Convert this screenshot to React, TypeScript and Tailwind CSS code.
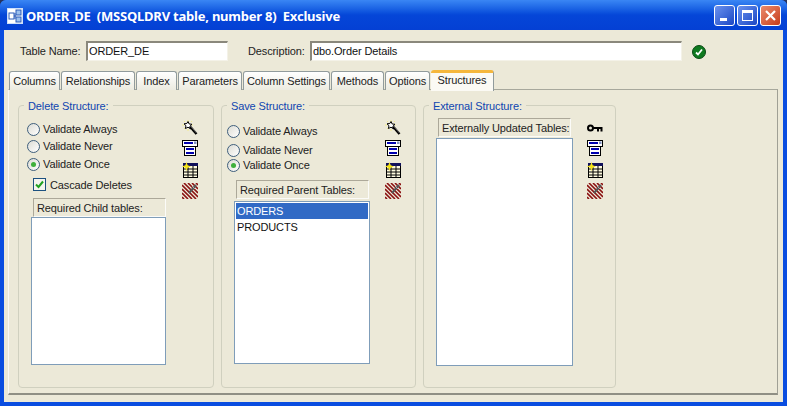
import * as React from "react";

const font = "font-['Liberation_Sans',Arial,sans-serif] tracking-[-0.12px]";

function WandIcon() {
  return (
    <svg width="16" height="16" viewBox="0 0 16 16" className="block">
      <path d="M6 0v2M6 9v2M0 5h2M10 5h1M2 1l1 1M2 9l1-1M10 1L9 2" stroke="#f4ec8c" strokeWidth="1" fill="none" />
      <path d="M6 1.500l1.200 2.500 2.800.3-2 1.900.6 2.800L6 7.200 3.400 8.500 4 5.700 2 3.800l2.800-.3z" fill="#fff" stroke="#000" strokeWidth="1" />
      <path d="M8 6.500l6.500 7.500" stroke="#000" strokeWidth="2.400" />
      <path d="M8.500 6l6 7" stroke="#8a8a8a" strokeWidth="0.7" />
    </svg>
  );
}

function FormIcon() {
  return (
    <svg width="16" height="16" viewBox="0 0 16 16" className="block">
      <rect x="0.500" y="0.500" width="15" height="6" fill="#fff" stroke="#000" />
      <rect x="2" y="2" width="9" height="2" fill="#0000b0" />
      <rect x="12" y="1.500" width="2.500" height="2.500" fill="#7f8fc0" />
      <rect x="2.500" y="6.500" width="11" height="9" fill="#fff" stroke="#000" />
      <rect x="4" y="8" width="8" height="2" fill="#0000b0" />
      <rect x="4" y="12" width="8" height="2" fill="#0000b0" />
    </svg>
  );
}

function GridIcon() {
  return (
    <svg width="16" height="16" viewBox="0 0 16 16" className="block">
      <rect x="1.500" y="1.500" width="14" height="14" fill="#fffbe0" stroke="#000" />
      <rect x="1" y="1" width="15" height="3" fill="#10105a" />
      <path d="M2 7h13M2 10h13M2 13h13M6 4v11M11 4v11" stroke="#000" strokeWidth="1" />
      <path d="M4.500 0l1.200 3.300L9 4.500 5.700 5.700 4.500 9 3.300 5.700 0 4.500l3.300-1.200z" fill="#f4e418" />
    </svg>
  );
}

function HatchIcon() {
  return (
    <svg width="16" height="16" viewBox="0 0 16 16" className="block">
      <path d="M0 2l14 14M0 6l10 10M0 10l6 6M0 14l2 2M2 0l14 14M6 0l10 10M10 0l6 6M14 0l2 2" stroke="#8a1010" strokeWidth="1.600" fill="none" />
      <path d="M7 10l7-8" stroke="#555" strokeWidth="2" />
      <path d="M10 3l3 3" stroke="#aaa" strokeWidth="1" />
    </svg>
  );
}

function KeyIcon() {
  return (
    <svg width="16" height="9" viewBox="0 0 16 9" className="block">
      <circle cx="3.500" cy="4" r="2.500" fill="none" stroke="#000" strokeWidth="2" />
      <path d="M6 3h9.500v2H6zM10 5h2v2.500h-2zM13.500 5h2v2.500h-2z" fill="#000" />
    </svg>
  );
}

function Radio({ label, checked, className }: { label: string; checked?: boolean; className: string }) {
  return (
    <div className={`flex items-center h-[14px] ${className}`}>
      <span className="w-[13px] h-[13px] rounded-full border border-[#3f5f7c] bg-gradient-to-br from-[#dcdcd4] to-white flex items-center justify-center shrink-0">
        {checked && <span className="w-[5px] h-[5px] rounded-full bg-[#3fb03c]" />}
      </span>
      <span className="ml-[3px] text-[11px] leading-none text-[#222]">{label}</span>
    </div>
  );
}

function Icons({ first }: { first?: React.ReactNode }) {
  return (
    <div className="flex flex-col items-center w-[16px] mt-[14px]">
      <div className="h-[16px] flex items-center">{first ?? <WandIcon />}</div>
      <div className="mt-[4px]"><FormIcon /></div>
      <div className="mt-[6px]"><GridIcon /></div>
      <div className="mt-[5px]"><HatchIcon /></div>
    </div>
  );
}

function Group({ title, className, children }: { title: string; className: string; children: React.ReactNode }) {
  return (
    <div className={`relative h-[283px] border border-[#d0d0bf] rounded-[4px] ${className}`}>
      <span className="absolute left-[5px] -top-[7px] bg-[#ece9d8] px-[4px] text-[11px] leading-[14px] text-[#0f46b0]">
        {title}
      </span>
      {children}
    </div>
  );
}

function ListHeader({ label, className }: { label: string; className: string }) {
  return (
    <div className={`h-[19px] flex items-center whitespace-nowrap border-t border-l border-[#aca899] border-r border-r-[#fbfbf8] border-b border-b-[#fbfbf8] pl-[3px] pt-px text-[11px] leading-none text-[#222] ${className}`}>
      {label}
    </div>
  );
}

const tabs = [
  { label: "Columns", w: "w-[51px]" },
  { label: "Relationships", w: "w-[74px]" },
  { label: "Index", w: "w-[41px]" },
  { label: "Parameters", w: "w-[64px]" },
  { label: "Column Settings", w: "w-[87px]" },
  { label: "Methods", w: "w-[53px]" },
  { label: "Options", w: "w-[45px]" },
];

export default function App() {
  return (
    <div className="w-[787px] h-[406px] bg-[#26345e]">
      <div className={`w-full h-full overflow-hidden flex flex-col bg-[#0a4de0] rounded-t-[6px] ${font}`}>
        {/* title bar */}
        <div className="h-[30px] shrink-0 flex items-center pl-[7px] pr-[6px] bg-gradient-to-b from-[#3a86f4] via-[#0546d8] to-[#0440d4]">
          <svg width="16" height="16" viewBox="0 0 16 16" className="block shrink-0 mt-[1px]">
            <rect x="0.500" y="0.500" width="15" height="15" fill="#fff" stroke="#cfe0fa" />
            <rect x="2" y="5" width="5" height="6" fill="#fff" stroke="#2a5bb8" />
            <rect x="9" y="2" width="5" height="5" fill="#9cc0ee" stroke="#2a5bb8" />
            <rect x="9" y="9" width="5" height="5" fill="#9cc0ee" stroke="#2a5bb8" />
            <path d="M7 8h2M8 5v6" stroke="#2a5bb8" />
          </svg>
          <span className="ml-[3px] pt-[3px] text-[13px] font-bold text-white whitespace-pre leading-none font-['Noto_Sans',sans-serif] tracking-[-0.22px]">
            {"ORDER_DE  (MSSQLDRV table, number 8)  Exclusive"}
          </span>
          <div className="ml-auto flex gap-[2px] mt-[1px]">
            <div className="w-[21px] h-[21px] rounded-[3px] border border-white bg-gradient-to-br from-[#6c92ee] to-[#1c45c4] flex items-end pl-[5px] pb-[4px]">
              <span className="w-[7px] h-[3px] bg-white" />
            </div>
            <div className="w-[21px] h-[21px] rounded-[3px] border border-white bg-gradient-to-br from-[#6c92ee] to-[#1c45c4] flex items-center justify-center">
              <span className="w-[11px] h-[11px] border border-white border-t-[3px]" />
            </div>
            <div className="w-[21px] h-[21px] rounded-[3px] border border-white bg-gradient-to-br from-[#ea8a6c] to-[#c63a16] flex items-center justify-center">
              <svg width="13" height="13" viewBox="0 0 13 13" className="block">
                <path d="M2 2l9 9M11 2l-9 9" stroke="#fff" strokeWidth="2.200" />
              </svg>
            </div>
          </div>
        </div>

        {/* client area */}
        <div className="flex-1 mx-[4px] mb-[4px] bg-[#ece9d8] px-[4px] flex flex-col">
          <div className="h-[20px] mt-[11px] flex items-center text-[11px] leading-none text-[#222]">
            <span className="ml-[12px] w-[66px]">Table Name:</span>
            <div className="w-[142px] h-[20px] bg-white border-t-2 border-l-2 border-[#8a887c] border-r border-b border-r-[#f4f2e8] border-b-[#f4f2e8] pl-[1px] flex items-center text-[#111]">
              ORDER_DE
            </div>
            <span className="ml-[20px] w-[62px]">Description:</span>
            <div className="w-[372px] h-[20px] bg-white border-t-2 border-l-2 border-[#8a887c] border-r border-b border-r-[#f4f2e8] border-b-[#f4f2e8] pl-[1px] flex items-center text-[#111]">
              dbo.Order Details
            </div>
            <svg width="14" height="14" viewBox="0 0 14 14" className="block ml-[10px] mt-[1px]">
              <circle cx="7" cy="7" r="6.500" fill="#0f7a20" stroke="#0a4a14" />
              <path d="M4 7.500l2 2 4-5" stroke="#fff" strokeWidth="1.800" fill="none" />
            </svg>
          </div>

          {/* tabs */}
          <div className="mt-[8px] ml-px h-[21px] flex items-end relative z-10">
            {tabs.map((t) => (
              <div
                key={t.label}
                className={`${t.w} h-[19px] mr-px last:mr-0 border border-b-0 border-[#919b9c] rounded-t-[3px] bg-gradient-to-b from-white to-[#ecebe0] flex items-center justify-center text-[11px] leading-none text-[#222]`}
              >
                {t.label}
              </div>
            ))}
            <div className="w-[63px] h-[21px] -mb-px border-r border-[#919b9c] rounded-t-[3px] border-t-[3px] border-t-[#f5b73c] bg-[#fbfaf4] flex items-center justify-center pb-[4px] text-[11px] leading-none text-[#222]">
              Structures
            </div>
          </div>

          {/* panel */}
          <div className="w-[770px] h-[306px] -mt-px border border-t-[#a7a89c] border-l-[#fbfaf4] border-r-[#a0a095] border-b-2 border-b-[#8f8f84] bg-[#ece9d8] pl-[9px] pt-[15px] flex gap-[7px]">
            <Group title="Delete Structure:" className="w-[196px]">
              <div className="flex">
                <div className="w-[163px] pl-[8px]">
                  <Radio label="Validate Always" className="mt-[16px]" />
                  <Radio label="Validate Never" className="mt-[3px]" />
                  <Radio label="Validate Once" checked className="mt-[4px]" />
                  <div className="flex items-center ml-[6px] mt-[7px] h-[13px]">
                    <span className="w-[13px] h-[13px] border border-[#1c5180] bg-[#f4f4ee] flex items-center justify-center">
                      <svg width="9" height="9" viewBox="0 0 9 9" className="block">
                        <path d="M1 4.500l2.500 2.500L8 1.500" stroke="#21a121" strokeWidth="2" fill="none" />
                      </svg>
                    </span>
                    <span className="ml-[4px] pt-px text-[11px] leading-none text-[#222]">Cascade Deletes</span>
                  </div>
                  <ListHeader label="Required Child tables:" className="ml-[6px] w-[133px] mt-[7px]" />
                  <div className="ml-[4px] w-[135px] h-[148px] bg-white border border-[#7f9db9]" />
                </div>
                <Icons />
              </div>
            </Group>

            <Group title="Save Structure:" className="w-[195px]">
              <div className="flex">
                <div className="w-[163px] pl-[5px]">
                  <Radio label="Validate Always" className="mt-[18px]" />
                  <Radio label="Validate Never" className="mt-[5px]" />
                  <Radio label="Validate Once" checked className="mt-[1px]" />
                  <ListHeader label="Required Parent Tables:" className="ml-[9px] w-[133px] mt-[8px]" />
                  <div className="ml-[7px] mt-[2px] w-[136px] h-[163px] bg-white border border-[#7f9db9] p-px text-[11px] leading-none text-[#111]">
                    <div className="h-[16px] bg-[#316ac5] text-white flex items-center pl-px">ORDERS</div>
                    <div className="h-[16px] flex items-center pl-px">PRODUCTS</div>
                  </div>
                </div>
                <Icons />
              </div>
            </Group>

            <Group title="External Structure:" className="w-[193px]">
              <div className="flex">
                <div className="w-[163px] pl-[12px]">
                  <ListHeader label="Externally Updated Tables:" className="ml-[2px] w-[133px] mt-[12px]" />
                  <div className="mt-[1px] w-[137px] h-[228px] bg-white border border-[#7f9db9]" />
                </div>
                <Icons first={<KeyIcon />} />
              </div>
            </Group>
          </div>
        </div>
      </div>
    </div>
  );
}
